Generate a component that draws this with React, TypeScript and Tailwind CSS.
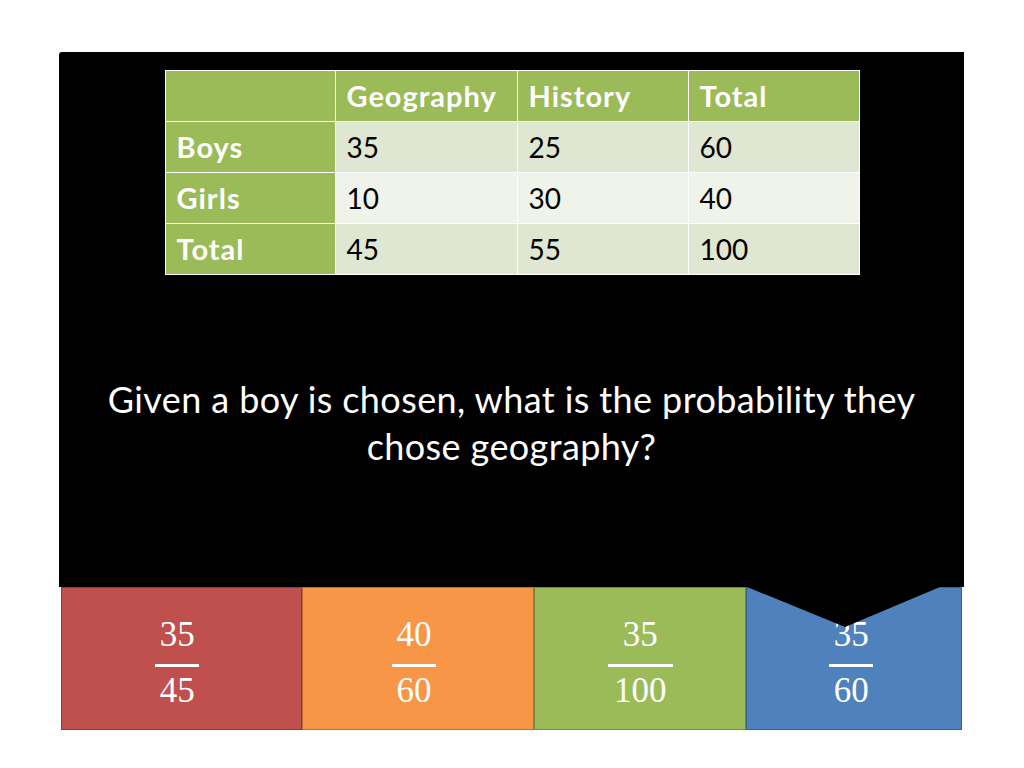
import React from "react";

const rows = [
  { label: "Boys", vals: ["35", "25", "60"], bg: "bg-[#dfe7d2]" },
  { label: "Girls", vals: ["10", "30", "40"], bg: "bg-[#eff3ea]" },
  { label: "Total", vals: ["45", "55", "100"], bg: "bg-[#dfe7d2]" },
];

function Fraction({ num, den, wide }: { num: string; den: string; wide?: boolean }) {
  return (
    <div className="flex flex-col items-center text-white pt-[9px]" style={{ fontFamily: '"Liberation Serif", "DejaVu Serif", serif' }}>
      <div className="text-[35px] leading-[36px]">{num}</div>
      <div className={`h-[3px] bg-white mt-[11px] mb-[6px] ${wide ? "w-[65px]" : "w-[44px]"}`} />
      <div className="text-[35px] leading-[36px]">{den}</div>
    </div>
  );
}

export default function App() {
  const cell = "border border-white px-[11px] h-[51px] align-middle text-left";
  return (
    <div className="w-[1024px] h-[768px] bg-white relative" style={{ fontFamily: 'Lato, "Open Sans", sans-serif' }}>
      <div className="absolute left-[59px] top-[52px] w-[905px]">
        <div className="bg-black h-[535px] rounded-tl-[3px] flex flex-col items-center">
          <table className="mt-[18px] ml-[1px] w-[694px] border-collapse table-fixed">
            <colgroup>
              <col className="w-[170px]" />
              <col className="w-[182px]" />
              <col className="w-[171px]" />
              <col className="w-[171px]" />
            </colgroup>
            <thead>
              <tr className="bg-[#9bbb59] text-white font-bold text-[29px] tracking-[1px]">
                <th className={cell}></th>
                <th className={cell}>Geography</th>
                <th className={cell}>History</th>
                <th className={cell}>Total</th>
              </tr>
            </thead>
            <tbody>
              {rows.map((r) => (
                <tr key={r.label} className="text-[28px]">
                  <td className={`${cell} bg-[#9bbb59] text-white font-bold text-[29px] tracking-[1px]`}>{r.label}</td>
                  {r.vals.map((v, i) => (
                    <td key={i} className={`${cell} ${r.bg} text-black`}>{v}</td>
                  ))}
                </tr>
              ))}
            </tbody>
          </table>
          <div className="mt-[101px] text-white text-[36px] leading-[47px] tracking-[0.4px] text-center">
            Given a boy is chosen, what is the probability they
            <br />
            chose geography?
          </div>
        </div>
        <div className="flex h-[143px] px-[2px] relative">
          <div className="w-[241px] bg-[#c0504d] border border-[#8c3a38] flex items-center justify-center pr-[8px]">
            <Fraction num="35" den="45" />
          </div>
          <div className="w-[233px] bg-[#f79646] border border-[#b66d33] flex items-center justify-center pr-[8px]">
            <Fraction num="40" den="60" />
          </div>
          <div className="w-[212px] bg-[#9bbb59] border border-[#71893f] flex items-center justify-center">
            <Fraction num="35" den="100" wide />
          </div>
          <div className="w-[216px] bg-[#4f81bd] border border-[#3a5f8b] flex items-center justify-center pr-[6px]">
            <Fraction num="35" den="60" />
          </div>
          <svg className="absolute left-[688px] top-0" width="195" height="42" viewBox="0 0 195 42">
            <polygon points="0,0 98,40 193,0" fill="black" />
          </svg>
        </div>
      </div>
    </div>
  );
}
